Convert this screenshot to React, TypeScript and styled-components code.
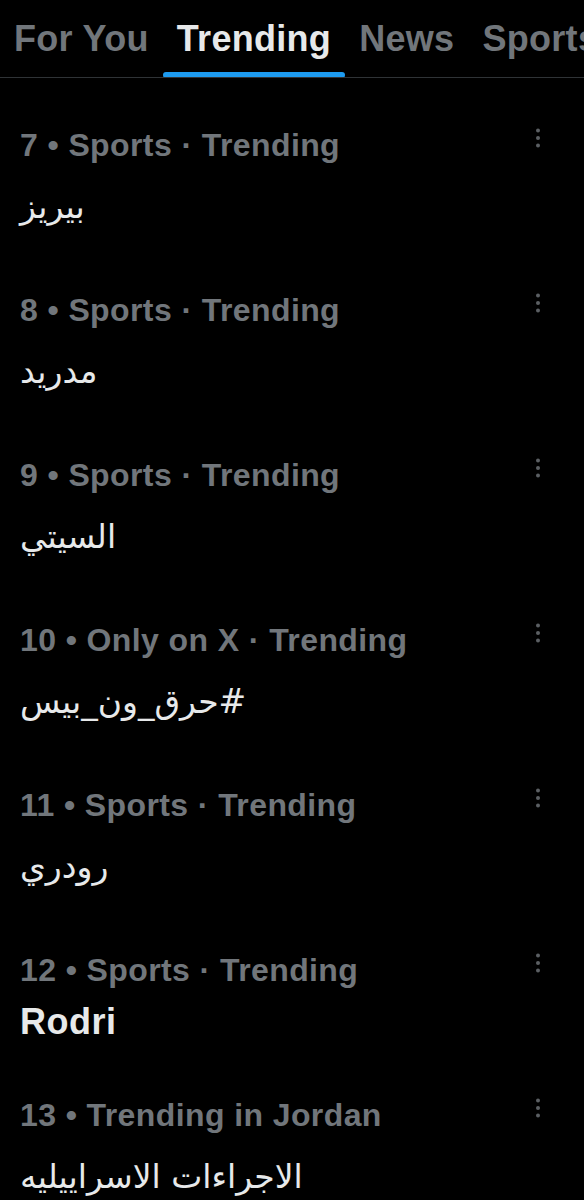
import React from 'react';
import styled, { createGlobalStyle } from 'styled-components';

const GlobalStyle = createGlobalStyle`
  html, body {
    margin: 0;
    padding: 0;
    background: #000;
  }
  body {
    font-family: 'Liberation Sans', Arial, 'DejaVu Sans', sans-serif;
    overflow: hidden;
  }
`;

const Page = styled.div`
  width: 584px;
  height: 1200px;
  background: #000;
  overflow: hidden;
`;

const TabBar = styled.nav`
  display: flex;
  height: 77px;
  border-bottom: 1px solid #2f3336;
  white-space: nowrap;
  overflow: hidden;
`;

const Tab = styled.div<{ $active?: boolean }>`
  position: relative;
  display: flex;
  align-items: center;
  flex-shrink: 0;
  padding: 0 14px;
  font-size: 36px;
  font-weight: 700;
  letter-spacing: 0.3px;
  color: ${({ $active }) => ($active ? '#e7e9ea' : '#71767b')};
`;

const Indicator = styled.span`
  position: absolute;
  left: 0;
  right: 0;
  bottom: -1px;
  height: 6px;
  border-radius: 3px;
  background: #1d9bf0;
`;

const List = styled.div`
  padding-top: 22px;
`;

const Item = styled.div`
  display: flex;
  flex-direction: column;
  gap: 9px;
  padding: 25px 36px 25px 20px;
`;

const Header = styled.div`
  display: flex;
  justify-content: space-between;
  align-items: flex-start;
`;

const Meta = styled.div`
  font-size: 32px;
  line-height: 40px;
  font-weight: 700;
  letter-spacing: 0.4px;
  color: #71767b;
`;

const MoreButton = styled.div`
  width: 20px;
  height: 24px;
  margin-top: 1px;
  display: flex;
  align-items: center;
  justify-content: center;
`;

const Title = styled.div<{ $arabic?: boolean }>`
  color: #e7e9ea;
  text-align: left;
  font-size: ${({ $arabic }) => ($arabic ? '33px' : '36px')};
  line-height: ${({ $arabic }) => ($arabic ? '66px' : '46px')};
  letter-spacing: ${({ $arabic }) => ($arabic ? '0' : '0.5px')};
  font-weight: ${({ $arabic }) => ($arabic ? 400 : 700)};
  font-family: ${({ $arabic }) =>
    $arabic ? "'DejaVu Sans', sans-serif" : "'Liberation Sans', Arial, sans-serif"};
`;

const MoreIcon = () => (
  <svg width="8" height="24" viewBox="0 0 8 24">
    <circle cx="4" cy="4.5" r="2" fill="#5b5f63" />
    <circle cx="4" cy="12" r="2" fill="#5b5f63" />
    <circle cx="4" cy="19.5" r="2" fill="#5b5f63" />
  </svg>
);

const tabs = ['For You', 'Trending', 'News', 'Sports', 'Entertainment'];

const trends = [
  { meta: '7 • Sports · Trending', title: 'بيريز', arabic: true },
  { meta: '8 • Sports · Trending', title: 'مدريد', arabic: true },
  { meta: '9 • Sports · Trending', title: 'السيتي', arabic: true },
  { meta: '10 • Only on X · Trending', title: '#حرق_ون_بيس', arabic: true },
  { meta: '11 • Sports · Trending', title: 'رودري', arabic: true },
  { meta: '12 • Sports · Trending', title: 'Rodri', arabic: false },
  { meta: '13 • Trending in Jordan', title: 'الاجراءات الاسراييليه', arabic: true },
];

const App = () => {
  return (
    <Page>
      <GlobalStyle />
      <TabBar>
        {tabs.map((tab) => (
          <Tab key={tab} $active={tab === 'Trending'}>
            {tab}
            {tab === 'Trending' && <Indicator />}
          </Tab>
        ))}
      </TabBar>
      <List>
        {trends.map((trend) => (
          <Item key={trend.meta}>
            <Header>
              <Meta>{trend.meta}</Meta>
              <MoreButton>
                <MoreIcon />
              </MoreButton>
            </Header>
            <Title dir="auto" $arabic={trend.arabic}>
              {trend.title}
            </Title>
          </Item>
        ))}
      </List>
    </Page>
  );
};

export default App;
